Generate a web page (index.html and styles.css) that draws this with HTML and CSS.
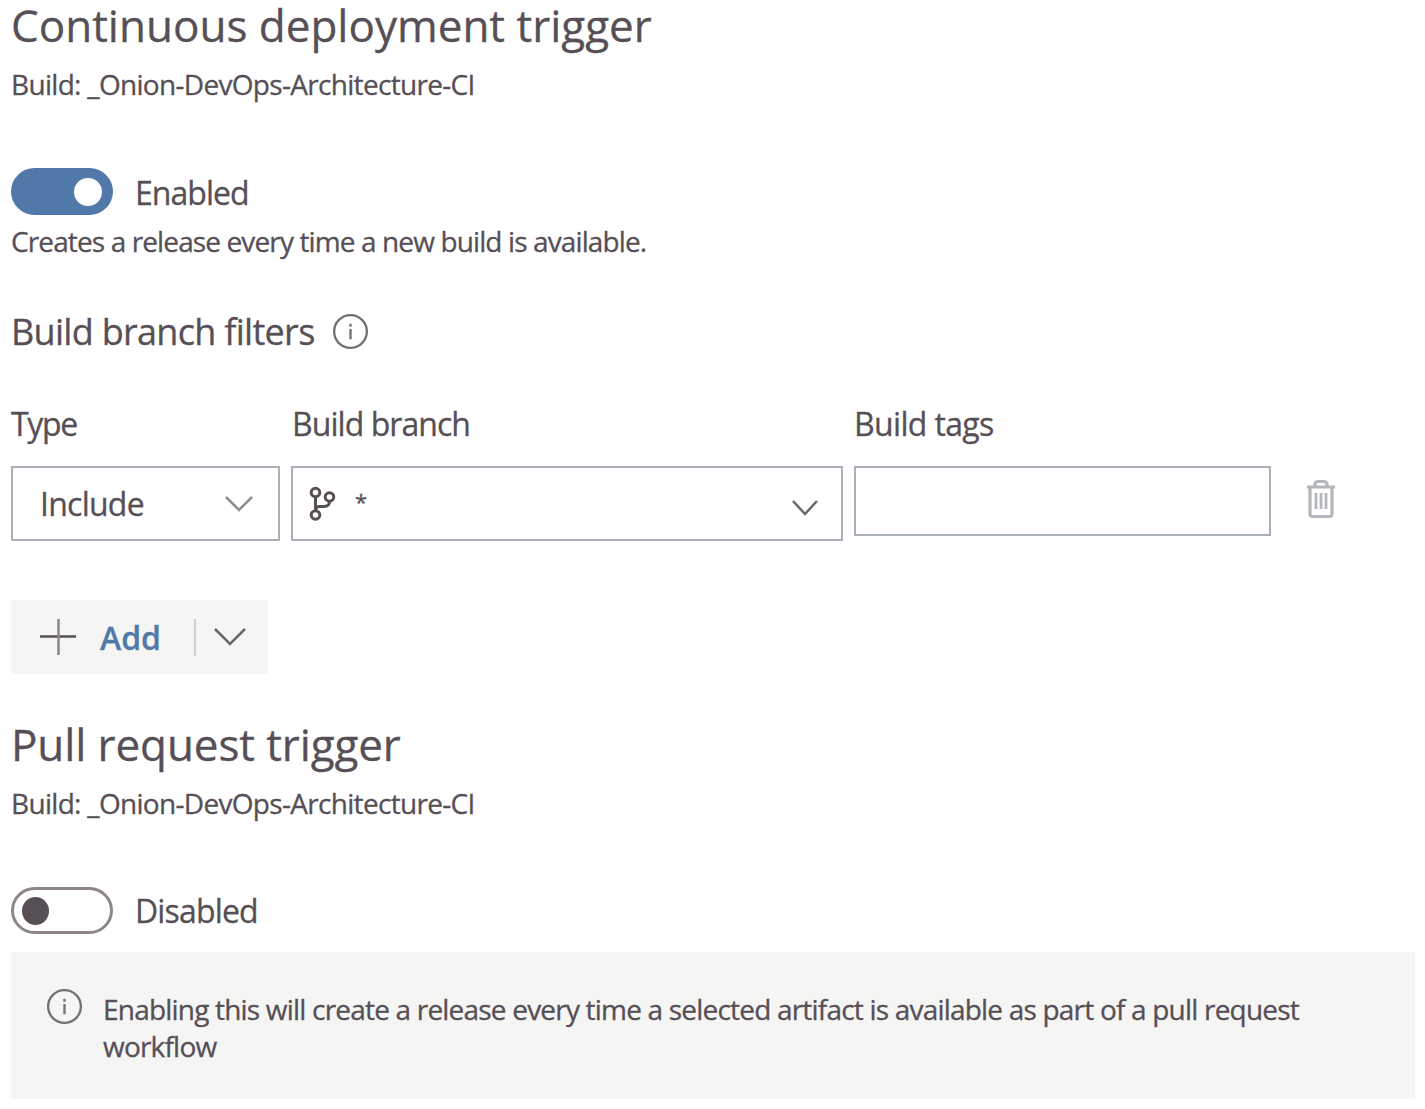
FILE: index.html
```html
<!DOCTYPE html>
<html lang="en">
<head>
<meta charset="utf-8">
<title>Release triggers</title>
<link rel="stylesheet" href="styles.css">
</head>
<body>
<main class="panel">
  <section class="deploy">
    <h1 class="title title-deploy">Continuous deployment trigger</h1>
    <p class="source">Build: _Onion-DevOps-Architecture-CI</p>
    <div class="switch-row">
      <span class="toggle toggle-on"><span class="knob"></span></span>
      <span class="state state-on">Enabled</span>
    </div>
    <p class="hint">Creates a release every time a new build is available.</p>
    <div class="filters-head">
      <h2 class="subtitle">Build branch filters</h2>
      <svg class="info" viewBox="0 0 38 38"><circle cx="19" cy="19" r="16.8"/><path d="M19 16.500V27M19 11v3"/></svg>
    </div>
    <div class="filters">
      <span class="label label-type">Type</span>
      <span class="label label-branch">Build branch</span>
      <span class="label label-tags">Build tags</span>
      <span></span>
      <div class="field field-type">
        <span class="value">Include</span>
        <svg class="chevron chevron-light" viewBox="0 0 30 18"><path d="M2 2l13 13L28 2"/></svg>
      </div>
      <div class="field field-branch">
        <svg class="branch" viewBox="0 0 28 36"><circle cx="7.5" cy="6.5" r="4.3"/><circle cx="21.5" cy="11" r="4.3"/><circle cx="7.5" cy="29" r="4.3"/><path d="M7.500 11v13.500M7.500 24.500c0-3 1.500-4 4-4h4.500c3 0 5.500-1.500 5.500-5"/></svg>
        <span class="star">*</span>
        <svg class="chevron" viewBox="0 0 30 18"><path d="M3 2l12 13L27 2"/></svg>
      </div>
      <div class="field field-tags"></div>
      <svg class="trash" viewBox="0 0 30 40"><path class="lid" d="M1 8h28M9 7.500V6q0-3.500 3-3.500h6q3 0 3 3.500v1.500"/><path d="M4 9v26q0 2.500 2.500 2.500h17q2.500 0 2.500-2.500V9"/><path class="slats" d="M10 14v16M15 14v16M20 14v16"/></svg>
    </div>
    <div class="add">
      <svg class="plus" viewBox="0 0 36 36"><path class="plus-h" d="M0 17.500h36"/><path class="plus-v" d="M18.500 0v36"/></svg>
      <span class="add-text">Add</span>
      <span class="divider"></span>
      <svg class="add-chevron" viewBox="0 0 34 20"><path d="M2 2l15 15L32 2"/></svg>
    </div>
  </section>
  <section class="pull">
    <h1 class="title title-pull">Pull request trigger</h1>
    <p class="source">Build: _Onion-DevOps-Architecture-CI</p>
    <div class="switch-row">
      <span class="toggle toggle-off"><span class="knob"></span></span>
      <span class="state state-off">Disabled</span>
    </div>
    <div class="notice">
      <svg class="info" viewBox="0 0 38 38"><circle cx="19" cy="19" r="16.8"/><path d="M19 16.500V27M19 11v3"/></svg>
      <p class="notice-text">Enabling this will create a release every time a selected artifact is available as part of a pull request<br>workflow</p>
    </div>
  </section>
</main>
</body>
</html>
```
FILE: styles.css
```css
* { box-sizing: border-box; }
body {
  margin: 0;
  background: #fff;
  color: #574f56;
  font-family: "Open Sans", "Noto Sans", sans-serif;
  white-space: nowrap;
  -webkit-text-stroke: 0.3px currentColor;
}
h1, h2, p { margin: 0; font-weight: 400; }
svg { display: block; fill: none; flex: none; }
.panel { padding: 0 10px 0 11px; }
.title { height: 48px; font-size: 44px; line-height: 50px; }
.title-pull { letter-spacing: -0.1px; }
.source { margin-top: 18px; font-size: 28px; line-height: 36px; letter-spacing: -0.69px; }
.switch-row { display: flex; align-items: center; height: 47px; margin-top: 66px; }
.toggle {
  display: flex;
  flex: none;
  align-items: center;
  width: 102px;
  height: 47px;
  border-radius: 24px;
  margin-right: 22px;
}
.toggle-on { justify-content: flex-end; padding-right: 11px; background: #5079aa; }
.toggle-off { padding-left: 8px; border: 3px solid #8f8785; }
.knob { width: 28px; height: 28px; border-radius: 50%; background: #fff; }
.toggle-off .knob { width: 27px; background: #574f56; }
.state { font-size: 32px; line-height: 46px; padding-top: 2px; letter-spacing: -0.95px; }
.state-off { padding-top: 0; letter-spacing: -0.85px; }
.hint { margin-top: 8px; font-size: 28px; line-height: 36px; letter-spacing: -0.88px; }
.filters-head { display: flex; align-items: center; margin-top: 48px; height: 48px; }
.subtitle { width: 321px; padding-top: 2px; font-size: 36px; line-height: 48px; letter-spacing: -0.7px; }
.info { width: 37px; height: 37px; stroke: #777073; stroke-width: 2.4; }
.filters {
  display: grid;
  grid-template-columns: 269px 552px 417px 30px;
  column-gap: 11px;
  align-items: start;
  margin-top: 48px;
}
.label { height: 63px; padding-top: 1px; font-size: 32px; line-height: 40px; letter-spacing: -0.95px; }
.label-type { letter-spacing: -1.3px; }
.label-branch { padding-left: 1px; }
.label-tags { letter-spacing: -0.65px; }
.field { display: flex; align-items: center; height: 75px; border: 2px solid #a9b0b8; }
.field-tags { height: 70px; }
.value { width: 185px; padding-left: 27px; font-size: 32px; line-height: 46px; letter-spacing: -0.75px; }
.chevron { width: 30px; height: 18px; stroke: #6c6669; stroke-width: 2.5; }
.chevron-light { margin-left: 26px; stroke: #918d90; }
.branch { width: 28px; height: 36px; margin-left: 15px; stroke: #574f56; stroke-width: 3; }
.star { width: 440px; padding: 0 0 6px 19px; font-size: 22px; line-height: 36px; }
.field-branch .chevron { margin: 8px 0 0 14px; }
.trash { width: 30px; height: 40px; margin: 13px 0 0 24px; stroke: #b3b7bd; stroke-width: 3.2; }
.slats { stroke-width: 2.8; }
.add {
  display: flex;
  align-items: center;
  width: 257px;
  height: 74px;
  margin-top: 59px;
  padding-left: 29px;
  background: #f5f5f4;
}
.plus { width: 36px; height: 36px; }
.plus-h { stroke: #574f56; stroke-width: 2.5; }
.plus-v { stroke: #8a8588; stroke-width: 2.5; }
.add-text { flex: none; width: 119px; padding: 1px 0 0 24px; color: #5079aa; font-size: 32px; font-weight: 600; line-height: 46px; }
.divider { flex: none; width: 2px; height: 37px; margin-left: -1px; background: #c9d0d6; }
.add-chevron { width: 34px; height: 20px; margin-left: 17px; stroke: #6c6669; stroke-width: 2.5; }
.pull { padding-top: 45px; }
.notice { display: flex; height: 147px; margin-top: 18px; padding: 36px 0 0 35px; background: #f5f5f4; }
.notice-text { margin: 3px 0 0 20px; font-size: 28px; line-height: 37px; letter-spacing: -0.8px; }
```
